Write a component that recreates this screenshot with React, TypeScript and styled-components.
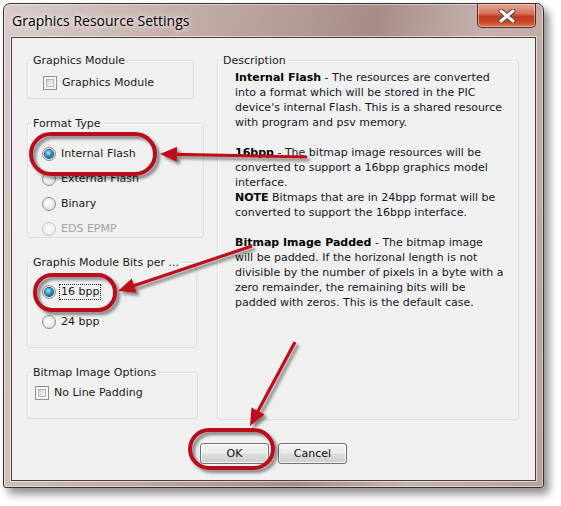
import React from 'react';
import styled, { createGlobalStyle } from 'styled-components';

const GlobalStyle = createGlobalStyle`
  html, body {
    margin: 0;
    padding: 0;
    background: #ffffff;
  }
  body {
    font-family: "DejaVu Sans", Verdana, sans-serif;
    font-size: 11px;
  }
`;

const Page = styled.div`
  position: relative;
  width: 561px;
  height: 506px;
  box-sizing: border-box;
  padding: 3px 0 0 3px;
  overflow: hidden;
`;

const Window = styled.div`
  width: 541px;
  height: 485px;
  box-sizing: border-box;
  display: flex;
  flex-direction: column;
  padding: 0 7px 6px 7px;
  border: 1px solid #3a3230;
  border-radius: 7px 7px 3px 3px;
  background: linear-gradient(100deg, #d9ccc8 0%, #c9b6b1 22%, #b39a94 48%, #a88c86 60%, #c6b3ae 78%, #b8a19b 100%);
  box-shadow: inset 0 0 0 1px rgba(255, 255, 255, 0.45), 5px 6px 8px rgba(0, 0, 0, 0.45);
`;

const TitleBar = styled.div`
  height: 33px;
  flex-shrink: 0;
  display: flex;
  justify-content: space-between;
  align-items: flex-start;
`;

const TitleText = styled.div`
  font-family: "Open Sans", "Noto Sans", sans-serif;
  font-size: 14px;
  line-height: 33px;
  padding-left: 1px;
  color: #000;
  text-shadow: 0 0 8px rgba(255, 255, 255, 0.9), 0 0 4px rgba(255, 255, 255, 0.8);
`;

const CloseButton = styled.div`
  width: 59px;
  height: 24px;
  box-sizing: border-box;
  display: flex;
  align-items: center;
  justify-content: center;
  border: 1px solid #5a2b22;
  border-top: none;
  border-radius: 0 0 5px 5px;
  background: linear-gradient(180deg, #e8a596 0%, #d7755f 40%, #c0391f 55%, #c94a2d 80%, #e07a52 100%);
  box-shadow: inset 0 0 0 1px rgba(255, 220, 210, 0.5);
`;

const Client = styled.div`
  flex: 1;
  box-sizing: border-box;
  display: flex;
  flex-direction: column;
  padding: 22px 0 0 15px;
  border: 1px solid #4b403e;
  background: #f0f0f0;
  box-shadow: 0 0 0 1px rgba(255, 255, 255, 0.55);
  color: #16162a;
`;

const FormRow = styled.div`
  display: flex;
  gap: 13px;
  align-items: flex-start;
`;

const LeftColumn = styled.div`
  display: flex;
  flex-direction: column;
  gap: 24px;
  width: 177px;
`;

const Frame = styled.div<{ $width: number; $height: number }>`
  width: ${(p) => p.$width}px;
  height: ${(p) => p.$height}px;
  box-sizing: border-box;
  border: 1px solid #d5dfe5;
  border-radius: 3px;
  box-shadow: inset 1px 1px 0 #ffffff;
`;

const Legend = styled.div`
  display: block;
  width: fit-content;
  margin: -7px 0 0 3px;
  padding: 0 2px;
  line-height: 13px;
  background: #f0f0f0;
  color: #1b1b1b;
  white-space: nowrap;
`;

const Options = styled.div<{ $top: number; $left: number; $gap?: number }>`
  display: flex;
  flex-direction: column;
  padding: ${(p) => p.$top}px 0 0 ${(p) => p.$left}px;
  gap: ${(p) => p.$gap ?? 0}px;
`;

const Option = styled.label<{ $disabled?: boolean }>`
  display: flex;
  align-items: center;
  gap: 5px;
  height: 16px;
  color: ${(p) => (p.$disabled ? '#a2a2a2' : '#1b1b1b')};
`;

const OptionText = styled.span<{ $focused?: boolean }>`
  line-height: 14px;
  outline: ${(p) => (p.$focused ? '1px dotted #2a2a2a' : 'none')};
  padding: 0 1px;
  margin-left: -1px;
`;

const CheckBox = styled.span`
  width: 14px;
  height: 14px;
  flex-shrink: 0;
  box-sizing: border-box;
  border: 1px solid #8e8f8f;
  background: #f5f5f5;
  padding: 2px;
  &::after {
    content: '';
    display: block;
    width: 100%;
    height: 100%;
    box-sizing: border-box;
    border: 1px solid #b4b8bd;
    background: linear-gradient(135deg, #cfd2d6 0%, #e6e7e9 60%, #f8f8f8 100%);
  }
`;

const Radio = styled.span<{ $checked?: boolean; $disabled?: boolean }>`
  width: 14px;
  height: 14px;
  flex-shrink: 0;
  box-sizing: border-box;
  display: flex;
  align-items: center;
  justify-content: center;
  border-radius: 50%;
  border: 1px solid ${(p) => (p.$disabled ? '#c7c7c7' : '#8d8e8f')};
  background: ${(p) =>
    p.$disabled
      ? 'radial-gradient(circle at 50% 45%, #fafafa 0%, #efefef 60%, #e2e2e2 100%)'
      : 'radial-gradient(circle at 45% 40%, #ffffff 0%, #eeeeee 45%, #cfd0d2 100%)'};
  &::after {
    content: '';
    display: ${(p) => (p.$checked ? 'block' : 'none')};
    width: 8px;
    height: 8px;
    border-radius: 50%;
    background: radial-gradient(circle at 42% 35%, #b9ecff 0%, #3fa9e4 35%, #0d5f9f 75%, #0b3c68 100%);
    box-shadow: 0 0 0 1px #29465f;
  }
`;

const Description = styled(Frame)``;

const DescText = styled.div`
  padding: 3px 0 0 17px;
  line-height: 15px;
  white-space: nowrap;
  color: #16162a;
  b {
    color: #000;
  }
`;

const Para = styled.p`
  margin: 0 0 15px 0;
`;

const ButtonBar = styled.div`
  display: flex;
  justify-content: center;
  gap: 9px;
  margin-top: 23px;
  padding-right: 15px;
`;

const Button = styled.button`
  width: 69px;
  height: 21px;
  box-sizing: border-box;
  padding: 0;
  font-family: inherit;
  font-size: 11px;
  color: #101010;
  border: 1px solid #707070;
  border-radius: 3px;
  background: linear-gradient(180deg, #f2f2f2 0%, #ebebeb 48%, #dddddd 52%, #cfcfcf 100%);
  box-shadow: inset 0 0 0 1px rgba(255, 255, 255, 0.75);
`;

const Overlay = styled.svg`
  position: absolute;
  left: 0;
  top: 0;
  pointer-events: none;
`;

type Pt = [number, number];

function Arrow({ from, to }: { from: Pt; to: Pt }) {
  const dx = to[0] - from[0];
  const dy = to[1] - from[1];
  const len = Math.hypot(dx, dy);
  const ux = dx / len;
  const uy = dy / len;
  const headLen = 17;
  const half = 7.5;
  const bx = to[0] - ux * headLen;
  const by = to[1] - uy * headLen;
  const pts = [
    `${to[0]},${to[1]}`,
    `${bx - uy * half},${by + ux * half}`,
    `${bx + uy * half},${by - ux * half}`,
  ].join(' ');
  return (
    <g>
      <line x1={from[0]} y1={from[1]} x2={bx + ux * 2} y2={by + uy * 2} stroke="#c0111b" strokeWidth={3.2} />
      <polygon points={pts} fill="#c0111b" />
    </g>
  );
}

function Annotations() {
  return (
    <Overlay width={561} height={506} viewBox="0 0 561 506">
      <defs>
        <filter id="shadow" x="-20%" y="-20%" width="140%" height="140%">
          <feDropShadow dx="3" dy="3" stdDeviation="1.6" floodColor="#000" floodOpacity="0.45" />
        </filter>
      </defs>
      <g filter="url(#shadow)" fill="none">
        <rect x={31} y={134} width={124} height={40} rx={20} stroke="#b8101a" strokeWidth={4} />
        <rect x={35} y={275} width={80} height={35} rx={17} stroke="#b8101a" strokeWidth={4} />
        <rect x={190} y={430} width={83} height={38} rx={19} stroke="#b8101a" strokeWidth={4} />
        <Arrow from={[307, 157]} to={[160, 154]} />
        <Arrow from={[252, 246]} to={[118, 291]} />
        <Arrow from={[295, 342]} to={[250, 426]} />
      </g>
    </Overlay>
  );
}

function CloseGlyph() {
  return (
    <svg width="18" height="14" viewBox="0 0 18 14">
      <path d="M3 2 L15 12 M15 2 L3 12" stroke="#4a4a4a" strokeWidth={5} strokeLinecap="round" />
      <path d="M3 2 L15 12 M15 2 L3 12" stroke="#ffffff" strokeWidth={3} strokeLinecap="round" />
    </svg>
  );
}

export default function App() {
  return (
    <>
      <GlobalStyle />
      <Page>
        <Window>
          <TitleBar>
            <TitleText>Graphics Resource Settings</TitleText>
            <CloseButton>
              <CloseGlyph />
            </CloseButton>
          </TitleBar>
          <Client>
            <FormRow>
              <LeftColumn>
                <Frame $width={167} $height={39}>
                  <Legend>Graphics Module</Legend>
                  <Options $top={8} $left={15}>
                    <Option>
                      <CheckBox />
                      <OptionText>Graphics Module</OptionText>
                    </Option>
                  </Options>
                </Frame>
                <Frame $width={177} $height={115}>
                  <Legend>Format Type</Legend>
                  <Options $top={16} $left={14} $gap={9}>
                    <Option>
                      <Radio $checked />
                      <OptionText>Internal Flash</OptionText>
                    </Option>
                    <Option>
                      <Radio />
                      <OptionText>External Flash</OptionText>
                    </Option>
                    <Option>
                      <Radio />
                      <OptionText>Binary</OptionText>
                    </Option>
                    <Option $disabled>
                      <Radio $disabled />
                      <OptionText>EDS EPMP</OptionText>
                    </Option>
                  </Options>
                </Frame>
                <Frame $width={170} $height={86}>
                  <Legend>Graphis Module Bits per ...</Legend>
                  <Options $top={15} $left={14} $gap={14}>
                    <Option>
                      <Radio $checked />
                      <OptionText $focused>16 bpp</OptionText>
                    </Option>
                    <Option>
                      <Radio />
                      <OptionText>24 bpp</OptionText>
                    </Option>
                  </Options>
                </Frame>
                <Frame $width={171} $height={47}>
                  <Legend>Bitmap Image Options</Legend>
                  <Options $top={6} $left={7}>
                    <Option>
                      <CheckBox />
                      <OptionText>No Line Padding</OptionText>
                    </Option>
                  </Options>
                </Frame>
              </LeftColumn>
              <Description $width={302} $height={360}>
                <Legend>Description</Legend>
                <DescText>
                  <Para>
                    <b>Internal Flash</b> - The resources are converted
                    <br />
                    into a format which will be stored in the PIC
                    <br />
                    device's internal Flash. This is a shared resource
                    <br />
                    with program and psv memory.
                  </Para>
                  <Para>
                    <b>16bpp</b> - The bitmap image resources will be
                    <br />
                    converted to support a 16bpp graphics model
                    <br />
                    interface.
                    <br />
                    <b>NOTE</b> Bitmaps that are in 24bpp format will be
                    <br />
                    converted to support the 16bpp interface.
                  </Para>
                  <Para>
                    <b>Bitmap Image Padded</b> - The bitmap image
                    <br />
                    will be padded. If the horizonal length is not
                    <br />
                    divisible by the number of pixels in a byte with a
                    <br />
                    zero remainder, the remaining bits will be
                    <br />
                    padded with zeros. This is the default case.
                  </Para>
                </DescText>
              </Description>
            </FormRow>
            <ButtonBar>
              <Button>OK</Button>
              <Button>Cancel</Button>
            </ButtonBar>
          </Client>
        </Window>
        <Annotations />
      </Page>
    </>
  );
}
